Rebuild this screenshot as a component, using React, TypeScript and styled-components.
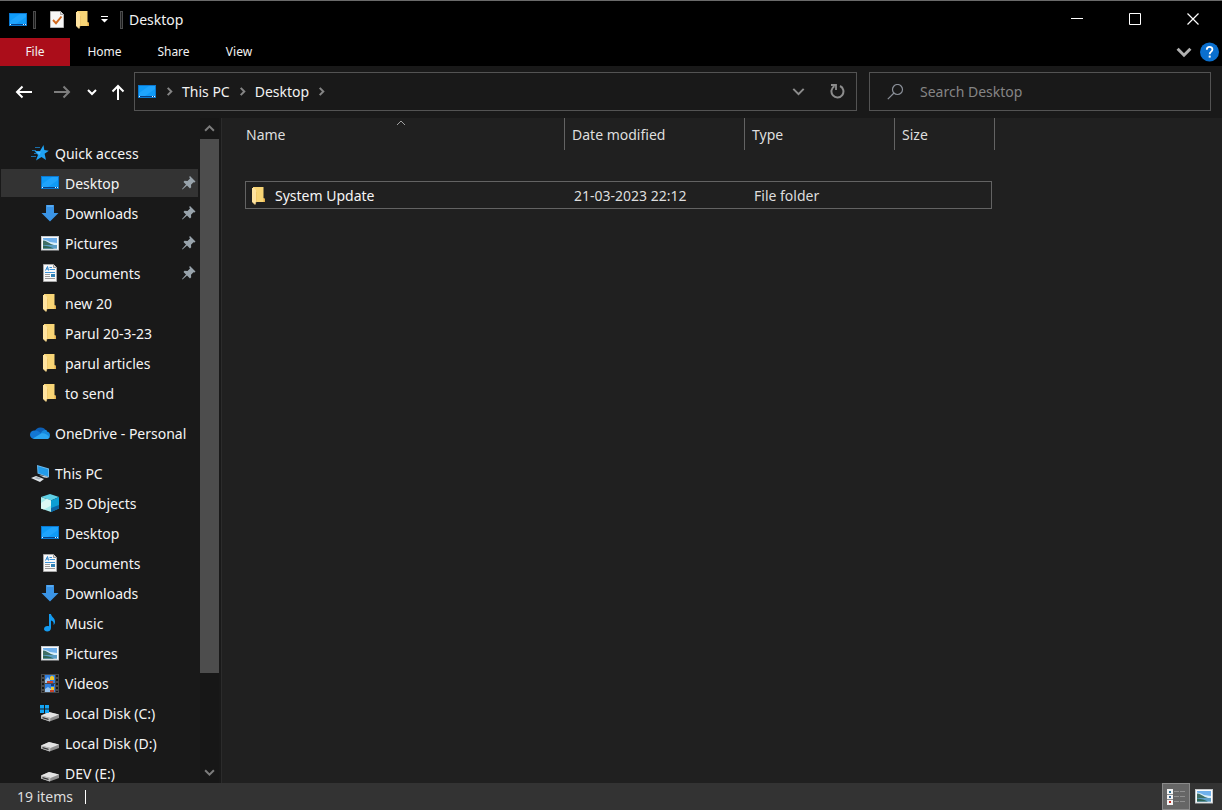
import React from "react";
import styled, { createGlobalStyle } from "styled-components";

const GlobalStyle = createGlobalStyle`
  * { box-sizing: border-box; }
  body {
    margin: 0;
    background: #202020;
    color: #f2f2f2;
    font-family: "Noto Sans", "Open Sans", sans-serif;
    font-size: 14px;
    line-height: 20px;
  }
  button, input { font: inherit; color: inherit; }
  svg { display: block; flex: none; }
`;

const Window = styled.div`
  display: flex;
  flex-direction: column;
  height: 100vh;
  overflow: hidden;
`;

const PlainButton = styled.button`
  display: flex;
  align-items: center;
  justify-content: center;
  padding: 0;
  border: 0;
  background: transparent;
`;

/* Title bar */

const TitleBar = styled.header`
  display: flex;
  align-items: center;
  height: 38px;
  padding-left: 9px;
  flex: none;
  background: #000;
  border-top: 1px solid #6a6a6a;
`;

const QuickTools = styled.div`
  display: flex;
  align-items: center;
  gap: 12px;
  padding: 0 12px 0 14px;
`;

const Divider = styled.span`
  width: 3px;
  height: 18px;
  border: 1px solid #4c4c4c;
  background: #1c1c1c;
`;

const Title = styled.h1`
  flex: 1;
  margin: 0;
  padding-left: 6px;
  font-size: 14px;
  line-height: 20px;
  font-weight: 400;
`;

const IconSlot = styled.span`
  display: flex;
  margin-right: 6px;
`;

const CaptionButton = styled(PlainButton)`
  align-self: flex-start;
  width: 58px;
  height: 36px;
`;

/* Ribbon */

const Ribbon = styled.nav`
  display: flex;
  align-items: stretch;
  height: 28px;
  flex: none;
  background: #000;
`;

const RibbonTab = styled(PlainButton)<{ $file?: boolean; $narrow?: boolean }>`
  width: ${(p) => (p.$narrow ? 62 : p.$file ? 70 : 69)}px;
  background: ${(p) => (p.$file ? "#ab0d1a" : "transparent")};
  font-size: 12px;
  line-height: 16px;
`;

const RibbonTools = styled.div`
  display: flex;
  align-items: center;
  gap: 8px;
  margin-left: auto;
  padding-right: 3px;
`;

/* Navigation bar */

const NavBar = styled.div`
  display: flex;
  align-items: center;
  height: 52px;
  flex: none;
  padding: 0 11px 1px 4px;
  background: #191919;
`;

const History = styled.div`
  display: flex;
  align-items: center;
  width: 130px;
  flex: none;
`;

const HistoryButton = styled(PlainButton)<{ $width: number }>`
  width: ${(p) => p.$width}px;
  height: 32px;
`;

const Field = styled.div`
  display: flex;
  align-items: center;
  height: 39px;
  border: 1px solid #535353;
`;

const AddressBar = styled(Field)`
  flex: 1;
  margin-right: 12px;
  padding: 0 11px 0 3px;
`;

const Crumbs = styled.div`
  display: flex;
  align-items: center;
  flex: 1;
  gap: 8px;
  padding-left: 9px;
`;

const AddressTools = styled.div`
  display: flex;
  align-items: center;
  gap: 25px;
`;

const SearchBox = styled(Field).attrs({ as: "label" })`
  width: 342px;
  padding-left: 17px;
  gap: 16px;
`;

const SearchInput = styled.input`
  flex: 1;
  min-width: 0;
  padding: 0;
  border: 0;
  outline: 0;
  background: transparent;
  &::placeholder { color: #858585; opacity: 1; }
`;

/* Body */

const Body = styled.div`
  display: flex;
  flex: 1;
  min-height: 0;
`;

const Sidebar = styled.aside`
  display: flex;
  width: 222px;
  flex: none;
  background: #191919;
  border-right: 1px solid #2b2b2b;
`;

const Tree = styled.nav`
  display: flex;
  flex-direction: column;
  gap: 10px;
  width: 200px;
  padding-top: 20px;
  overflow: hidden;
`;

const TreeGroup = styled.ul`
  margin: 0;
  padding: 0 2px 0 1px;
  list-style: none;
`;

const TreeItem = styled.li`
  padding: 1px 0;
`;

const TreeLink = styled.a<{ $root?: boolean; $selected?: boolean }>`
  display: flex;
  align-items: center;
  height: 28px;
  gap: 6px;
  padding: 0 2px 0 ${(p) => (p.$root ? 30 : 40)}px;
  background: ${(p) => (p.$selected ? "#333333" : "transparent")};
  color: #f5f5f5;
  text-decoration: none;
  white-space: nowrap;
`;

const TreeLabel = styled.span`
  flex: 1;
  padding-top: 1px;
`;

const ScrollBar = styled.div`
  display: flex;
  flex-direction: column;
  width: 19px;
  background: #171717;
`;

const ScrollButton = styled(PlainButton)`
  height: 21px;
  flex: none;
`;

const ScrollTrack = styled.div`
  display: flex;
  flex-direction: column;
  flex: 1;
`;

const ScrollThumb = styled.div`
  flex: 6;
  background: #4d4d4d;
`;

const ScrollRest = styled.div`
  flex: 1;
`;

const Content = styled.main`
  flex: 1;
  min-width: 0;
  padding-left: 16px;
  background: #202020;
`;

const FileTable = styled.table`
  width: 757px;
  table-layout: fixed;
  border-collapse: separate;
  border-spacing: 0;
`;

const TableHead = styled.thead`
  &::after {
    content: "";
    display: block;
    height: 31px;
  }
`;

const HeadCell = styled.th`
  position: relative;
  height: 32px;
  padding: 1px 0 0 7px;
  border-right: 1px solid #636363;
  color: #dedede;
  font-weight: 400;
  text-align: left;
  &:first-child { padding-left: 8px; }
`;

const SortMark = styled.span`
  position: absolute;
  top: 0;
  left: 50%;
  margin-left: -5px;
`;

const Cell = styled.td`
  height: 28px;
  padding: 1px 0 0 9px;
  border: 0 solid #636363;
  border-width: 1px 0;
  color: #dedede;
`;

const NameCell = styled(Cell)`
  padding-left: 6px;
  border-left-width: 1px;
  color: #f5f5f5;
`;

const LastCell = styled(Cell)`
  border-right-width: 1px;
`;

const EdgeCell = styled.td`
  padding: 0;
`;

const FileName = styled.span`
  display: flex;
  align-items: center;
  gap: 10px;
`;

/* Status bar */

const StatusBar = styled.footer`
  display: flex;
  align-items: center;
  height: 27px;
  flex: none;
  padding: 0 4px 0 17px;
  background: #333333;
  color: #dedede;
`;

const ItemCount = styled.span`
  flex: 1;
  display: flex;
  align-items: center;
  gap: 12px;
  padding-top: 1px;
  &::after {
    content: "";
    width: 1px;
    height: 14px;
    background: #fff;
  }
`;

const ViewButton = styled(PlainButton)<{ $active?: boolean }>`
  width: 28px;
  height: 27px;
  border: ${(p) => (p.$active ? "1px solid #8a8a8a" : "0")};
  background: ${(p) => (p.$active ? "#666666" : "transparent")};
`;

/* Icons */

const DesktopIcon = () => (
  <svg width="18" height="14" viewBox="0 0 18 14">
    <path d="M0 0h18v13H0z" fill="#0a78d0" />
    <path d="M1 1h16v10H1z" fill="#0f9bf8" />
    <path d="M1 8L11 1h6v3L7 11H1z" fill="#1fa4fd" />
    <path d="M1 11h16v1H1z" fill="#063f86" />
    <path d="M1 11h1v1H1zM14 11h1v1h-1zM16 11h1v1h-1z" fill="#d8f0ff" />
  </svg>
);

const FolderIcon = () => (
  <svg width="13" height="18" viewBox="0 0 13 18">
    <path d="M1 0h10.500v11L13 12v3H4L1 14z" fill="#f8d576" />
    <path d="M0 1h2l2 2v12l-1 2.500L0 15z" fill="#ffe3a0" />
    <path d="M4.500 5v10" stroke="#eec468" strokeWidth=".7" />
    <path d="M1 15.500l2 2 1-2" stroke="#e0c07a" strokeWidth=".8" fill="none" />
    <path d="M11.500 11l1.500 1v3h-1.500z" fill="#e6b04a" />
  </svg>
);

const WideFolder = () => (
  <svg width="18" height="18" viewBox="-2 0 18 18">
    <FolderIcon />
  </svg>
);

const PropertiesIcon = () => (
  <svg width="14" height="17" viewBox="0 0 14 17">
    <path d="M.5.500h10l3 3v13H.5z" fill="#f7f7f7" stroke="#b4b4b4" />
    <path d="M10.500.500v3h3" fill="#ddd" stroke="#a5a5a5" />
    <path d="M3 9l3 3.200L11.500 5.500" fill="none" stroke="#d2691e" strokeWidth="1.900" />
  </svg>
);

const StarIcon = () => (
  <svg width="18" height="16" viewBox="0 0 18 16">
    <path d="M12.500 0l.8 5 4.500.8-4.200 3L15 15l-4.500-3L5 15.500 7 10 3.500 6H9z" fill="#1fa2f3" />
    <path d="M12 2L9.500 7l-4.500-.3L8.500 10z" fill="#4dbaff" />
    <path d="M4 2.500h5M1 5.500h4M3 8.500h3M0 11.500h5" stroke="#1b6ea8" strokeWidth="1" />
  </svg>
);

const DownloadIcon = () => (
  <svg width="18" height="17" viewBox="0 0 18 17">
    <path d="M5 0h8v8h4.500L9 16.500.5 8H5z" fill="#3a94e6" />
    <path d="M6 0h6v2H6z" fill="#57a9f0" />
  </svg>
);

const PictureIcon = () => (
  <svg width="18" height="15" viewBox="0 0 18 15">
    <path d="M0 0h18v14.500H0z" fill="#c3c7ca" />
    <path d="M1 1h16v12.500H1z" fill="#fbfbfb" />
    <path d="M2 2h14v10.500H2z" fill="#6fb0ec" />
    <path d="M2 3.500l4 1 3 1.500 7 1V9H2z" fill="#d9eefb" />
    <path d="M2 4.500c3 0 5 2 8 3.500l3 1H2z" fill="#3f6f66" />
    <path d="M2 9h14v3.500H2z" fill="#5b9cc4" />
    <path d="M2 9.500l6 1 5 2H2z" fill="#2f6553" />
  </svg>
);

const DocumentIcon = () => (
  <svg width="18" height="18" viewBox="0 0 18 18">
    <path d="M2.500.500h10l3 3v14h-13z" fill="#f8f8f8" stroke="#a6a6a6" />
    <path d="M12.500.500v3h3" fill="#ddd" stroke="#989898" />
    <path d="M4.500 6.500L6.500 2.500l1 4M5.300 5h2" fill="none" stroke="#2b86cf" />
    <path d="M8.500 3.500H11M8.500 5.500H14M4 8.500h10" stroke="#3c94d8" />
    <path d="M4 10.500h5M4 12.500h5M4 14.500h10" stroke="#9a9a9a" />
    <path d="M10 10h4v3h-4z" fill="#2f81b5" />
  </svg>
);

const CloudIcon = () => (
  <svg width="20" height="14" viewBox="0 0 20 14">
    <path d="M5 5a6 5.500 0 0 1 11-.500L11 9z" fill="#0d5fb5" />
    <path d="M4 13a4 4 0 0 1 .5-8.500C7 4 9 5.500 12 8L8 13z" fill="#1377d3" />
    <path d="M11 7c1-3 6-4 6-1.500 4 .5 4 7 0 7.500h-6z" fill="#1688dc" />
    <path d="M3 12.500L11 7.500c3-1 6 1 8.500 3.500-.5 1.500-1.500 2-2.500 2H4.500z" fill="#2ba6f2" />
  </svg>
);

const ComputerIcon = () => (
  <svg width="18" height="17" viewBox="0 0 18 17">
    <path d="M6 0l12 3.500v9L6.500 8.500z" fill="#6cb9ec" />
    <path d="M7 1.200l10 3v7L7.500 8z" fill="#229be9" />
    <path d="M8 10l8 1.500 1 1.500-4-.5z" fill="#cbd3d9" />
    <path d="M0 13l5-2 8 3-4 3z" fill="#e0e5e8" />
    <path d="M3 13l3-1 4 1.500-2 1z" fill="#a4afb7" />
  </svg>
);

const CubeIcon = () => (
  <svg width="18" height="18" viewBox="0 0 18 18">
    <path d="M9 0l9 3-8 3.500L0 3z" fill="#5fd0e6" />
    <path d="M0 3l10 3.500V18L0 14.500z" fill="#a8ebec" />
    <path d="M0 9l6-4 4 1.500v5L3 15.500l-3-1z" fill="#dcf8f4" />
    <path d="M10 6.500L18 3v11.500L10 18z" fill="#0c9ed3" />
    <path d="M10 14l8-3v3.500L10 18z" fill="#0b65a5" />
  </svg>
);

const MusicIcon = () => (
  <svg width="18" height="18" viewBox="0 0 18 18">
    <path d="M8 0h2c.3 3 4.500 4 4 8.500-.2 1-.7 2-1.500 2.500.5-3-.5-4-2.500-4.500V14c0 4.500-7 4.500-7 1 0-2.500 3-3.800 5-2.700z" fill="#149bf0" />
  </svg>
);

const VideoIcon = () => (
  <svg width="18" height="19" viewBox="0 0 18 19">
    <path d="M0 0h18v19H0z" fill="#4a4a4a" />
    <path d="M1 1h2v2H1zM1 5h2v2H1zM1 9h2v2H1zM1 13h2v2H1zM1 17h2v1H1zM15 1h2v2h-2zM15 5h2v2h-2zM15 9h2v2h-2zM15 13h2v2h-2zM15 17h2v1h-2z" fill="#171717" />
    <path d="M4 1h10v8H4zM4 10h10v8H4z" fill="#2f7fe0" />
    <path d="M4 6l3-3 2 3v3H4zM4 15l3-2 3 2v3H4z" fill="#9cc6ee" />
    <path d="M9 3l2-1.500 2 1.500v3H9zM10 13h3v3h-3z" fill="#f0c62c" />
    <path d="M6 7h6v2H6zM9 16h4v2H9z" fill="#c6452c" />
    <path d="M10 10h3v2h-3z" fill="#163a7a" />
  </svg>
);

const DriveIcon = ({ system }: { system?: boolean }) => (
  <svg width="18" height="18" viewBox="0 0 18 18" overflow="visible">
    <path d="M0 11.500L8 8l10 2.500v3.500L8.500 17.500 0 14.500z" fill="#8f8f8f" />
    <path d="M0 11.500L8 8l10 2.500-8.500 3.500z" fill="#e4e4e4" />
    <path d="M0 11.500L9.500 14 9 17.500 0 14.500z" fill="#bdbdbd" />
    <path d="M1.500 13l6 1.700V16l-6-1.700z" fill="#333" />
    {system && (
      <path d="M-1 1h4v3.500h-4zM4 1h4v3.500H4zM-1 5.500h4V9h-4zM4 5.500h4V9H4z" fill="#13a4f4" />
    )}
  </svg>
);

const PinIcon = () => (
  <svg width="14" height="14" viewBox="0 0 14 14">
    <path d="M8 0l5.500 5.500-1 1-1-.3L9 8.700l.2 2.500-1.200 1.300-3-3L.5 13.500l-.5-.5L4 8.500 1.500 6l1-1.200L5.500 5 8 2.500 7.200 1z" fill="#98a3ab" />
  </svg>
);

type ChevronProps = { direction?: "up" | "down" | "right"; size: number; color: string; weight?: number };

const Chevron = ({ direction = "down", size, color, weight = 2 }: ChevronProps) => {
  const paths = { down: "M1 3l4 4 4-4", up: "M1 7l4-4 4 4", right: "M3 1l4 4-4 4" };
  return (
    <svg width={size} height={size} viewBox="0 0 10 10">
      <path d={paths[direction]} fill="none" stroke={color} strokeWidth={(weight * 10) / size} />
    </svg>
  );
};

const ArrowIcon = ({ color, flip }: { color: string; flip?: boolean }) => (
  <svg width="18" height="14" viewBox="0 0 18 14">
    <path
      d={flip ? "M1 7h15M10.500 1.500L16 7l-5.500 5.500" : "M17 7H2M7.500 1.500L2 7l5.500 5.500"}
      fill="none"
      stroke={color}
      strokeWidth="2"
    />
  </svg>
);

/* Data */

type Entry = { label: string; icon: React.ReactNode; pinned?: boolean; selected?: boolean };

const groups: { name: string; entries: Entry[] }[] = [
  {
    name: "quick",
    entries: [
      { label: "Quick access", icon: <StarIcon /> },
      { label: "Desktop", icon: <DesktopIcon />, pinned: true, selected: true },
      { label: "Downloads", icon: <DownloadIcon />, pinned: true },
      { label: "Pictures", icon: <PictureIcon />, pinned: true },
      { label: "Documents", icon: <DocumentIcon />, pinned: true },
      { label: "new 20", icon: <WideFolder /> },
      { label: "Parul 20-3-23", icon: <WideFolder /> },
      { label: "parul articles", icon: <WideFolder /> },
      { label: "to send", icon: <WideFolder /> },
    ],
  },
  { name: "cloud", entries: [{ label: "OneDrive - Personal", icon: <CloudIcon /> }] },
  {
    name: "pc",
    entries: [
      { label: "This PC", icon: <ComputerIcon /> },
      { label: "3D Objects", icon: <CubeIcon /> },
      { label: "Desktop", icon: <DesktopIcon /> },
      { label: "Documents", icon: <DocumentIcon /> },
      { label: "Downloads", icon: <DownloadIcon /> },
      { label: "Music", icon: <MusicIcon /> },
      { label: "Pictures", icon: <PictureIcon /> },
      { label: "Videos", icon: <VideoIcon /> },
      { label: "Local Disk (C:)", icon: <DriveIcon system /> },
      { label: "Local Disk (D:)", icon: <DriveIcon /> },
      { label: "DEV (E:)", icon: <DriveIcon /> },
    ],
  },
];

const TreeIcon = styled.span`
  display: flex;
  justify-content: center;
  width: 18px;
  flex: none;
`;

export default function App() {
  return (
    <Window>
      <GlobalStyle />
      <TitleBar>
        <IconSlot><DesktopIcon /></IconSlot>
        <Divider />
        <QuickTools>
          <PlainButton aria-label="Properties"><PropertiesIcon /></PlainButton>
          <PlainButton aria-label="New folder"><FolderIcon /></PlainButton>
          <PlainButton aria-label="Customize quick access">
            <svg width="7" height="7" viewBox="0 0 7 7">
              <path d="M0 0h7v1H0zM0 3h7L3.500 6.500z" fill="#fff" />
            </svg>
          </PlainButton>
        </QuickTools>
        <Divider />
        <Title>Desktop</Title>
        <CaptionButton aria-label="Minimize">
          <svg width="12" height="12" viewBox="0 0 12 12"><path d="M0 5.500h12" stroke="#fff" /></svg>
        </CaptionButton>
        <CaptionButton aria-label="Maximize">
          <svg width="12" height="12" viewBox="0 0 12 12"><path d="M.5.500h11v11H.5z" fill="none" stroke="#fff" /></svg>
        </CaptionButton>
        <CaptionButton aria-label="Close">
          <svg width="12" height="12" viewBox="0 0 12 12"><path d="M.5.500l11 11M11.500.500l-11 11" stroke="#fff" strokeWidth="1.200" /></svg>
        </CaptionButton>
      </TitleBar>

      <Ribbon>
        <RibbonTab $file>File</RibbonTab>
        <RibbonTab>Home</RibbonTab>
        <RibbonTab>Share</RibbonTab>
        <RibbonTab $narrow>View</RibbonTab>
        <RibbonTools>
          <PlainButton aria-label="Expand ribbon"><Chevron size={16} color="#b0b0b0" weight={3} /></PlainButton>
          <PlainButton aria-label="Help">
            <svg width="19" height="20" viewBox="0 0 19 20">
              <circle cx="9.500" cy="10" r="9.500" fill="#0a6fce" />
              <path d="M6.800 7.800c0-3.800 5.600-3.600 5.600-.4 0 2.200-2.700 2.200-2.700 4.800" fill="none" stroke="#fff" strokeWidth="1.800" />
              <path d="M8.700 13.600h2v2h-2z" fill="#fff" />
            </svg>
          </PlainButton>
        </RibbonTools>
      </Ribbon>

      <NavBar>
        <History>
          <HistoryButton $width={39} aria-label="Back"><ArrowIcon color="#fff" /></HistoryButton>
          <HistoryButton $width={38} aria-label="Forward"><ArrowIcon color="#7d7d7d" flip /></HistoryButton>
          <HistoryButton $width={22} aria-label="Recent locations"><Chevron size={10} color="#fff" /></HistoryButton>
          <HistoryButton $width={30} aria-label="Up">
            <svg width="14" height="16" viewBox="0 0 14 16">
              <path d="M7 16V2M1.500 7.500L7 2l5.500 5.500" fill="none" stroke="#fff" strokeWidth="2" />
            </svg>
          </HistoryButton>
        </History>
        <AddressBar>
          <DesktopIcon />
          <Crumbs>
            <Chevron direction="right" size={9} color="#858585" />
            <PlainButton>This PC</PlainButton>
            <Chevron direction="right" size={9} color="#858585" />
            <PlainButton>Desktop</PlainButton>
            <Chevron direction="right" size={9} color="#858585" />
          </Crumbs>
          <AddressTools>
            <PlainButton aria-label="Previous locations"><Chevron size={13} color="#8c8c8c" /></PlainButton>
            <PlainButton aria-label="Refresh">
              <svg width="15" height="15" viewBox="0 0 15 15">
                <path d="M10 2a6 6 0 1 1-5.500.2" fill="none" stroke="#8c8c8c" strokeWidth="2" />
                <path d="M1 1h5v5" fill="none" stroke="#8c8c8c" strokeWidth="1.800" />
              </svg>
            </PlainButton>
          </AddressTools>
        </AddressBar>
        <SearchBox>
          <svg width="17" height="16" viewBox="0 0 17 16">
            <circle cx="10.500" cy="5.500" r="5" fill="none" stroke="#8a8f98" strokeWidth="1.200" />
            <path d="M7 9L.8 15.200" stroke="#8a8f98" strokeWidth="1.200" />
          </svg>
          <SearchInput type="text" placeholder="Search Desktop" aria-label="Search Desktop" />
        </SearchBox>
      </NavBar>

      <Body>
        <Sidebar>
          <Tree>
            {groups.map((group) => (
              <TreeGroup key={group.name}>
                {group.entries.map((entry, index) => (
                  <TreeItem key={entry.label}>
                    <TreeLink href="#" $root={index === 0} $selected={entry.selected}>
                      <TreeIcon>{entry.icon}</TreeIcon>
                      <TreeLabel>{entry.label}</TreeLabel>
                      {entry.pinned && <PinIcon />}
                    </TreeLink>
                  </TreeItem>
                ))}
              </TreeGroup>
            ))}
          </Tree>
          <ScrollBar>
            <ScrollButton aria-label="Scroll up"><Chevron direction="up" size={11} color="#7c7c7c" /></ScrollButton>
            <ScrollTrack>
              <ScrollThumb />
              <ScrollRest />
            </ScrollTrack>
            <ScrollButton aria-label="Scroll down"><Chevron size={11} color="#7c7c7c" /></ScrollButton>
          </ScrollBar>
        </Sidebar>

        <Content>
          <FileTable>
            <colgroup>
              <col width="7" />
              <col width="320" />
              <col width="180" />
              <col width="150" />
              <col width="97" />
              <col width="3" />
            </colgroup>
            <TableHead>
              <tr>
                <HeadCell colSpan={2}>
                  <SortMark><Chevron direction="up" size={10} color="#a0a0a0" weight={1} /></SortMark>
                  Name
                </HeadCell>
                <HeadCell>Date modified</HeadCell>
                <HeadCell>Type</HeadCell>
                <HeadCell colSpan={2}>Size</HeadCell>
              </tr>
            </TableHead>
            <tbody>
              <tr>
                <EdgeCell />
                <NameCell>
                  <FileName><FolderIcon />System Update</FileName>
                </NameCell>
                <Cell>21-03-2023 22:12</Cell>
                <Cell>File folder</Cell>
                <LastCell />
                <EdgeCell />
              </tr>
            </tbody>
          </FileTable>
        </Content>
      </Body>

      <StatusBar>
        <ItemCount>19 items</ItemCount>
        <ViewButton $active aria-label="Details view">
          <svg width="18" height="16" viewBox="0 0 18 16">
            <path d="M0 0h6v16H0z" fill="#f4f4f4" />
            <path d="M2 2h2v2H2z" fill="#2b6d8f" />
            <path d="M2 7h2v2H2z" fill="#33608f" />
            <path d="M2 12h2v2H2z" fill="#c22a20" />
            <path d="M0 5.500h6M0 10.500h6" stroke="#8c8c8c" />
            <path d="M7 2.500h5M13 2.500h5M7 7.500h5M13 7.500h5M7 12.500h5M13 12.500h5" stroke="#8f8f8f" />
          </svg>
        </ViewButton>
        <ViewButton aria-label="Large icons view"><PictureIcon /></ViewButton>
      </StatusBar>
    </Window>
  );
}
